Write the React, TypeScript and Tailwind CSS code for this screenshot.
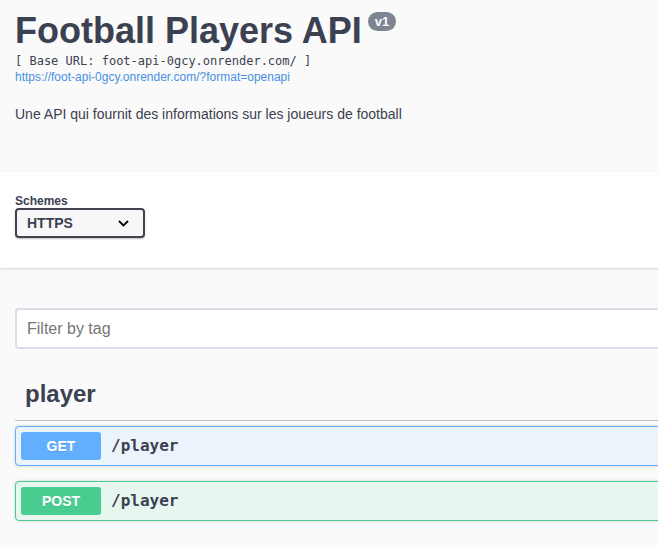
import React from 'react';

const ops = [
  { method: 'GET', path: '/player', box: 'border-[#61affe] bg-[#ebf3fb]', badge: 'bg-[#61affe]' },
  { method: 'POST', path: '/player', box: 'border-[#49cc90] bg-[#e8f6f0]', badge: 'bg-[#49cc90]' },
];

const App = () => {
  return (
    <div className="w-screen min-h-screen overflow-hidden bg-[#fafafa] text-[#3b4151] font-['Liberation_Sans',Arial,sans-serif]">
      <div className="w-[1000px]">
        {/* Info */}
        <div className="px-[15px] pt-[10px] h-[172px]">
          <div className="flex items-start">
            <h2 className="text-[36px] font-bold leading-[42px] m-0">Football Players API</h2>
            <span className="ml-[6px] mt-[2px] h-[19px] px-[7px] rounded-full bg-[#7d8492] text-white text-[13px] font-bold leading-[19px]">v1</span>
          </div>
          <pre className="mt-[1px] text-[12px] leading-[16px] font-['DejaVu_Sans_Mono',monospace] text-[#3b4151]">[ Base URL: foot-api-0gcy.onrender.com/ ]</pre>
          <a href="#" className="block text-[12px] leading-[16px] text-[#4990e2]">https://foot-api-0gcy.onrender.com/?format=openapi</a>
          <p className="mt-[19px] text-[14px] leading-[20px]">Une API qui fournit des informations sur les joueurs de football</p>
        </div>

        {/* Schemes */}
        <div className="h-[96px] bg-white shadow-[0_1px_2px_0_rgba(0,0,0,0.15)] px-[15px] pt-[22px]">
          <div className="text-[12px] font-bold leading-[14px]">Schemes</div>
          <div className="w-[130px] h-[30px] border-2 border-[#41444e] rounded-[4px] bg-[#f7f7f7] shadow-[0_1px_2px_0_rgba(0,0,0,0.25)] flex items-center justify-between pl-[10px] pr-[14px]">
            <span className="text-[14px] font-bold">HTTPS</span>
            <svg width="11" height="7" viewBox="0 0 11 7" fill="none" stroke="#000" strokeWidth="1.8">
              <path d="M1 1l4.5 4.5L10 1" />
            </svg>
          </div>
        </div>

        {/* Filter */}
        <div className="px-[15px] pt-[40px]">
          <input
            placeholder="Filter by tag"
            className="w-full h-[41px] border-2 border-[#d8dde7] rounded-[4px] bg-white px-[10px] text-[16px] placeholder:text-[#757575] outline-none"
          />
        </div>

        {/* Tag section */}
        <div className="px-[15px] pt-[28px]">
          <div className="border-b border-[rgba(59,65,81,0.3)] pl-[10px] pb-[9px]">
            <h3 className="text-[24px] font-bold leading-[34px]">player</h3>
          </div>
          <div className="pt-[5px] flex flex-col gap-[15px]">
            {ops.map((op) => (
              <div key={op.method} className={`h-[40px] border rounded-[4px] flex items-center pl-[5px] shadow-[0_0_3px_rgba(0,0,0,0.19)] ${op.box}`}>
                <span className={`w-[80px] h-[28px] rounded-[3px] text-white text-[14px] font-bold flex items-center justify-center [text-shadow:0_1px_0_rgba(0,0,0,0.1)] ${op.badge}`}>
                  {op.method}
                </span>
                <span className="ml-[10px] text-[16px] font-bold font-['DejaVu_Sans_Mono',monospace]">{op.path}</span>
              </div>
            ))}
          </div>
        </div>
      </div>
    </div>
  );
};

export default App;
